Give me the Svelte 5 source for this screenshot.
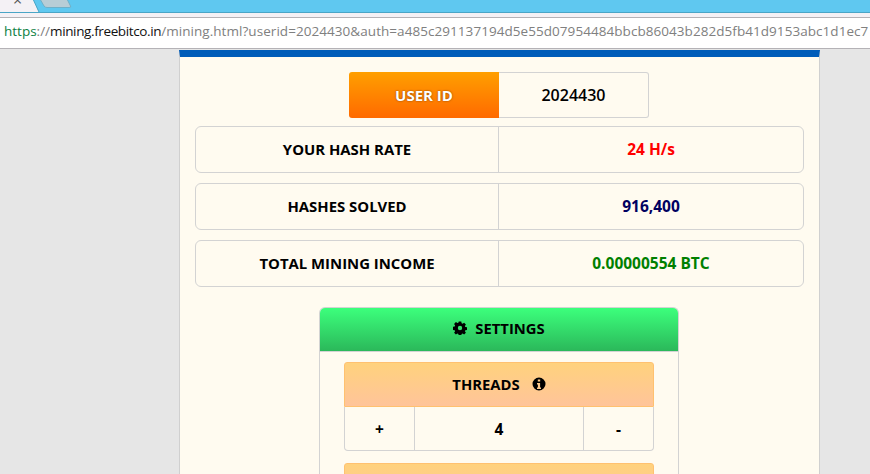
<script>
  const stats = [
    { label: 'YOUR HASH RATE', value: '24 H/s', tone: 'red' },
    { label: 'HASHES SOLVED', value: '916,400', tone: 'navy' },
    { label: 'TOTAL MINING INCOME', value: '0.00000554 BTC', tone: 'green' }
  ];
</script>

<div class="window">
  <div class="tabstrip">
    <svg class="tabs" width="80" height="13" viewBox="0 0 80 13">
      <path d="M0 -1 H33 L39 12.500 H0 Z" fill="#f4f1f5"/>
      <path d="M33 -1 L39 12" fill="none" stroke="#4aa5c6"/>
      <path d="M40 -1 L44 6 Q45 7.500 47 7.500 H69 Q71.500 7.500 70.500 6 L67 -1 Z" fill="#b7cdd6" stroke="#6fb0c8"/>
    </svg>
    <span class="close">×</span>
  </div>
  <div class="toolbar">
    <div class="url"><span class="scheme">https</span><span class="sep">://</span><span class="host">mining.freebitco.in</span><span class="path">/mining.html?userid=2024430&amp;auth=a485c291137194d5e55d07954484bbcb86043b282d5fb41d9153abc1d1ec7</span></div>
  </div>
  <div class="page">
    <main class="panel">
      <div class="userid">
        <div class="userid-label">USER ID</div>
        <div class="userid-value">2024430</div>
      </div>
      {#each stats as s}
        <div class="stat">
          <div class="cell label">{s.label}</div>
          <div class="cell value {s.tone}">{s.value}</div>
        </div>
      {/each}
      <section class="settings">
        <header class="settings-head">
          <svg class="icon" width="14" height="14" viewBox="0 0 14 14"><path fill-rule="evenodd" d="M5.700 0.500h2.600l.3 1.800 1 .4 1.500-1 1.800 1.800-1 1.500.4 1 1.800.3v2.600l-1.800.3-.4 1 1 1.500-1.800 1.800-1.500-1-1 .4-.3 1.800H5.700l-.3-1.800-1-.4-1.500 1-1.800-1.800 1-1.500-.4-1-1.800-.3V5.700l1.800-.3.4-1-1-1.500 1.800-1.800 1.500 1 1-.4zM7 4.800a2.200 2.200 0 1 0 0 4.400 2.200 2.200 0 0 0 0-4.400z" fill="#000"/></svg>
          <span>SETTINGS</span>
        </header>
        <div class="settings-body">
          <div class="control">
            <div class="control-head">
              <span>THREADS</span>
              <svg class="icon" width="14" height="14" viewBox="0 0 14 14"><path fill-rule="evenodd" d="M7 .5a6.500 6.500 0 1 1 0 13 6.500 6.500 0 0 1 0-13zM5.800 2.500v2h2.400v-2zM5 6v1.500h.9v3H5V12h4v-1.500h-.9V6z" fill="#000"/></svg>
            </div>
            <div class="stepper">
              <div class="step side">+</div>
              <div class="step mid">4</div>
              <div class="step side">-</div>
            </div>
          </div>
          <div class="control">
            <div class="control-head"></div>
          </div>
        </div>
      </section>
    </main>
  </div>
</div>

<style>
  :global(body) {
    margin: 0;
    overflow: hidden;
    background: #e6e6e6;
  }
  .window {
    width: 870px;
    height: 474px;
    overflow: hidden;
    display: flex;
    flex-direction: column;
    font-family: "Open Sans", "Noto Sans", sans-serif;
  }
  .tabstrip {
    position: relative;
    height: 13px;
    box-sizing: border-box;
    flex: none;
    background: #5fc8f0;
    border-bottom: 1px solid #4aa5c6;
    overflow: hidden;
  }
  .tabs {
    position: absolute;
    left: 0;
    top: 0;
  }
  .close {
    position: absolute;
    left: 13px;
    top: -7px;
    font-size: 16px;
    line-height: 14px;
    color: #555;
  }
  .toolbar {
    height: 36px;
    flex: none;
    background: #f4f1f5;
    box-sizing: border-box;
    padding-top: 4px;
    border-bottom: 1px solid #b4b2b6;
  }
  .url {
    height: 31px;
    box-sizing: border-box;
    background: #fff;
    border-top: 1px solid #b4b2b6;
    padding-left: 4px;
    font-size: 13.500px;
    line-height: 26px;
    white-space: nowrap;
    overflow: hidden;
    color: #808080;
  }
  .scheme { color: #0b8043; }
  .host { color: #111; letter-spacing: -0.38px; }
  .path { letter-spacing: 0.055px; }
  .page {
    flex: 1;
    display: flex;
    justify-content: flex-start;
    padding-left: 179px;
    min-height: 0;
    padding-top: 1px;
  }
  .panel {
    width: 609px;
    flex: none;
    background: #fffbf0;
    border-top: 7px solid #005cb9;
    border-left: 1px solid #d0d0d0;
    border-right: 1px solid #d0d0d0;
    padding: 15px 15px 0;
    display: flex;
    flex-direction: column;
    align-items: center;
  }
  .userid {
    display: flex;
    width: 300px;
    height: 46px;
    flex: none;
    margin: 0 1px 8px 0;
  }
  .userid-label {
    width: 150px;
    background: linear-gradient(#ff9f00, #ff6a00);
    border-radius: 3px 0 0 3px;
    color: #fff;
    font-weight: 700;
    font-size: 15px;
    display: flex;
    align-items: center;
    justify-content: center;
    text-shadow: 0 0 2px #7a3c00;
  }
  .userid-value {
    flex: 1;
    box-sizing: border-box;
    border: 1px solid #d3d3d3;
    border-left: none;
    border-radius: 0 3px 3px 0;
    font-weight: 600;
    font-size: 16px;
    color: #000;
    display: flex;
    align-items: center;
    justify-content: center;
  }
  .stat {
    display: flex;
    width: 100%;
    box-sizing: border-box;
    height: 47px;
    flex: none;
    border: 1px solid #d3d3d3;
    border-radius: 6px;
    margin-bottom: 10px;
    font-weight: 700;
    font-size: 14.900px;
  }
  .cell {
    display: flex;
    align-items: center;
    justify-content: center;
    padding-bottom: 2px;
  }
  .label {
    width: 302px;
    flex: none;
    color: #000;
    border-right: 1px solid #d3d3d3;
  }
  .value {
    flex: 1;
    font-size: 15.500px;
  }
  .red { color: #f00; }
  .navy { color: #000060; }
  .green { color: #008000; }
  .settings {
    width: 360px;
    box-sizing: border-box;
    flex: none;
    margin: 10px 1px 0 0;
    border: 1px solid #d3d3d3;
    border-bottom: none;
    border-radius: 6px 6px 0 0;
  }
  .settings-head {
    height: 44px;
    box-sizing: border-box;
    padding-bottom: 4px;
    border-bottom: 1px solid #d3d3d3;
    background: linear-gradient(#3cff7c, #2bb85a);
    border-radius: 5px 5px 0 0;
    display: flex;
    align-items: center;
    justify-content: center;
    gap: 8px;
    font-weight: 700;
    font-size: 14.800px;
    color: #000;
  }
  .settings-body {
    padding: 10px 24px 0;
    display: flex;
    flex-direction: column;
    gap: 12px;
  }
  .control-head {
    height: 45px;
    box-sizing: border-box;
    padding-bottom: 1px;
    border: 1px solid #ffc170;
    border-radius: 3px 3px 0 0;
    background: linear-gradient(#ffd27d, #ffc49a);
    display: flex;
    align-items: center;
    justify-content: center;
    gap: 12px;
    font-weight: 700;
    font-size: 14.800px;
    color: #000;
  }
  .icon { flex: none; }
  .stepper {
    display: flex;
    height: 44px;
    box-sizing: border-box;
    border: 1px solid #d3d3d3;
    border-top: none;
    border-radius: 0 0 4px 4px;
    font-weight: 700;
    color: #000;
  }
  .step {
    display: flex;
    align-items: center;
    justify-content: center;
    font-size: 15.500px;
  }
  .side { width: 69px; flex: none; }
  .mid {
    flex: 1;
    border-left: 1px solid #d3d3d3;
    border-right: 1px solid #d3d3d3;
  }
</style>
